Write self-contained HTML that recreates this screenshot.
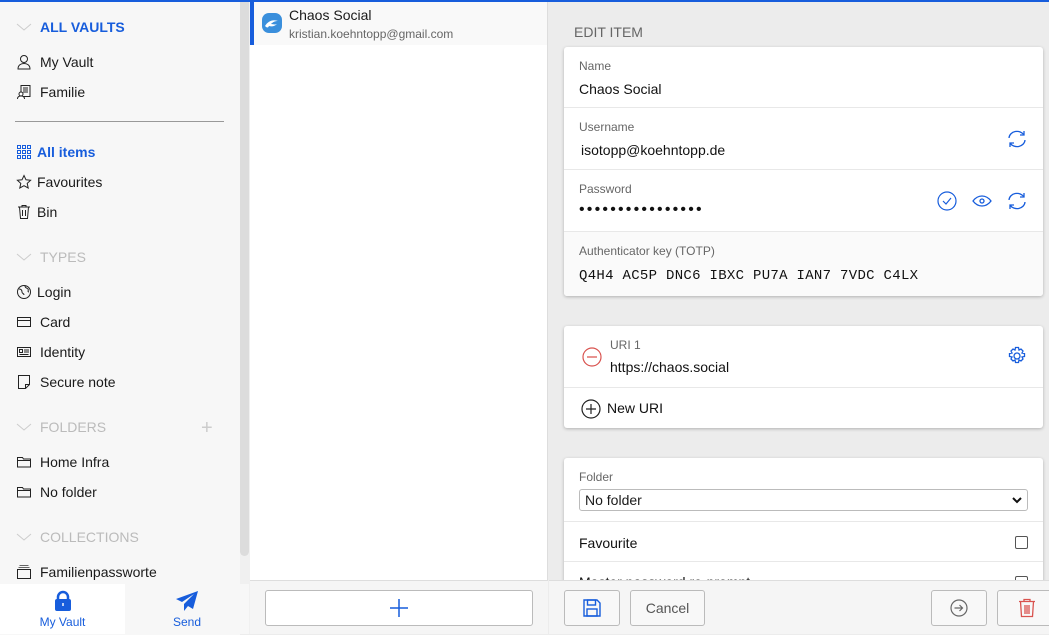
<!DOCTYPE html>
<html><head><meta charset="utf-8"><style>
*{box-sizing:border-box;margin:0;padding:0}
body{width:1049px;height:634px;overflow:hidden;font-family:"Liberation Sans",sans-serif;font-size:14px;color:#1a1a1a;position:relative;background:#ececec}
.topline{position:absolute;left:0;top:0;width:1049px;height:2px;background:#175ddc;z-index:5}
.side{position:absolute;left:0;top:1px;width:240px;height:634px;background:#f7f7f7}
.sb{position:absolute;left:240px;top:2px;width:9px;height:554px;background:#dcdcdc;border-radius:0 0 5px 5px}
.sbt{position:absolute;left:240px;top:2px;width:10px;height:632px;background:#f0f0f0}
.it{position:absolute;left:16px;font-size:14px;display:flex;align-items:center;gap:8px}
.it svg{width:16px;height:16px}
.hd{position:absolute;left:16px;font-size:14px;color:#bbb;display:flex;align-items:center;gap:8px}
.mid{position:absolute;left:250px;top:0;width:298px;height:634px;background:#fff;border-right:1px solid #ddd}
.right{position:absolute;left:549px;top:0;width:500px;height:634px;background:#ececec}
.card{position:absolute;left:15px;width:479px;background:#fff;border-radius:3px;box-shadow:0 1px 3px rgba(0,0,0,.25);overflow:hidden}
.row{position:relative;border-bottom:1px solid #e8e8e8;margin-left:0;padding-left:15px}
.lbl{font-size:12px;color:#666}
.val{font-size:14px;color:#111}
.bot{position:absolute;top:580px;height:54px;background:#f5f5f5;border-top:1px solid #ddd}
.btn{position:absolute;top:9px;height:36px;border:1px solid #bbb;border-radius:3px;background:#f8f8f8;display:flex;align-items:center;justify-content:center;color:#555}
</style></head><body>
<div class="topline"></div>
<div class="side">
 <div class="hd" style="top:18px;color:#175ddc;font-weight:bold"><svg width="16" height="10" viewBox="0 0 16 10"><path d="M1 2l7 6 7-6" fill="none" stroke="#ccc"/></svg>ALL VAULTS</div>
 <div class="it" style="top:53px"><svg viewBox="0 0 16 16"><circle cx="8" cy="5" r="3.5" fill="none" stroke="#222"/><path d="M2 15c0-4 3-5.5 6-5.5s6 1.5 6 5.5z" fill="none" stroke="#222"/></svg>My Vault</div>
 <div class="it" style="top:83px"><svg viewBox="0 0 16 16"><rect x="5" y="1.5" width="9" height="11" fill="none" stroke="#222"/><path d="M7 4h5M7 6h5M7 8h5" stroke="#222"/><circle cx="5" cy="10" r="2" fill="#fff" stroke="#222"/><path d="M1.5 15c0-2 1.5-3 3.5-3s3.5 1 3.5 3" fill="#fff" stroke="#222"/></svg>Familie</div>
 <div style="position:absolute;left:15px;top:120px;width:209px;height:1px;background:#999"></div>
 <div class="it" style="top:143px;color:#175ddc;font-weight:bold;gap:5px"><svg viewBox="0 0 16 16" fill="none" stroke="#175ddc"><rect x="1.5" y="1.5" width="3" height="3"/><rect x="6.5" y="1.5" width="3" height="3"/><rect x="11.5" y="1.5" width="3" height="3"/><rect x="1.5" y="6.5" width="3" height="3"/><rect x="6.5" y="6.5" width="3" height="3"/><rect x="11.5" y="6.5" width="3" height="3"/><rect x="1.5" y="11.5" width="3" height="3"/><rect x="6.5" y="11.5" width="3" height="3"/><rect x="11.5" y="11.5" width="3" height="3"/></svg>All items</div>
 <div class="it" style="top:173px;gap:5px"><svg viewBox="0 0 16 16"><path d="M8 1.5l2 4.3 4.6.5-3.4 3.1 1 4.6L8 11.7 3.8 14l1-4.6L1.4 6.3 6 5.8z" fill="none" stroke="#222"/></svg>Favourites</div>
 <div class="it" style="top:203px;gap:5px"><svg viewBox="0 0 16 16" fill="none" stroke="#222"><path d="M2 3h12M6 3V1.5h4V3M3.5 3l1 11.5h7l1-11.5M6.5 6v6M9.5 6v6"/></svg>Bin</div>
 <div class="hd" style="top:248px"><svg width="16" height="10" viewBox="0 0 16 10"><path d="M1 2l7 6 7-6" fill="none" stroke="#ccc"/></svg>TYPES</div>
 <div class="it" style="top:283px;gap:5px"><svg viewBox="0 0 16 16" fill="none" stroke="#222"><circle cx="8" cy="8" r="6.5"/><path d="M3 5c2 0 3 1 3 3s2 1 2 3M9 2c0 2 2 2 3 3s-1 3 1 3"/></svg>Login</div>
 <div class="it" style="top:313px"><svg viewBox="0 0 16 16" fill="none" stroke="#222"><rect x="1.5" y="3.5" width="13" height="9"/><path d="M1.5 6.5h13"/></svg>Card</div>
 <div class="it" style="top:343px"><svg viewBox="0 0 16 16" fill="none" stroke="#222"><rect x="1.5" y="3.5" width="13" height="9"/><rect x="3.5" y="5.5" width="3" height="3"/><path d="M8 6h5M8 8h5M3.5 10.5h9"/></svg>Identity</div>
 <div class="it" style="top:373px"><svg viewBox="0 0 16 16" fill="none" stroke="#222"><path d="M2.5 1.5h11v9l-4 4h-7zM13.5 10.5h-4v4"/></svg>Secure note</div>
 <div class="hd" style="top:418px"><svg width="16" height="10" viewBox="0 0 16 10"><path d="M1 2l7 6 7-6" fill="none" stroke="#ccc"/></svg>FOLDERS</div>
 <div style="position:absolute;left:201px;top:418px;color:#ccc;font-size:20px;line-height:18px">+</div>
 <div class="it" style="top:453px"><svg viewBox="0 0 16 16" fill="none" stroke="#222"><path d="M1.5 3.5h5l1 1.5h7v8h-13zM1.5 6.5h13"/></svg>Home Infra</div>
 <div class="it" style="top:483px"><svg viewBox="0 0 16 16" fill="none" stroke="#222"><path d="M1.5 3.5h5l1 1.5h7v8h-13zM1.5 6.5h13"/></svg>No folder</div>
 <div class="hd" style="top:528px"><svg width="16" height="10" viewBox="0 0 16 10"><path d="M1 2l7 6 7-6" fill="none" stroke="#ccc"/></svg>COLLECTIONS</div>
 <div class="it" style="top:563px"><svg viewBox="0 0 16 16" fill="none" stroke="#222"><rect x="1.5" y="5.5" width="13" height="9"/><path d="M2.5 3.5h11M3.5 1.5h9" stroke="#666"/></svg>Familienpasswort<span style="margin-left:-8px">e</span></div>
</div>
<div class="sbt"></div><div class="sb"></div>
<div style="position:absolute;left:0;top:584px;width:125px;height:50px;background:#fff;text-align:center;color:#175ddc;font-size:12px">
 <svg width="20" height="22" viewBox="0 0 20 22" style="margin-top:6px"><path d="M5 10V7a5 5 0 0110 0v3" fill="none" stroke="#175ddc" stroke-width="2.5"/><rect x="2" y="9" width="16" height="12" rx="2" fill="#175ddc"/><rect x="9.3" y="13" width="1.4" height="3" fill="#fff"/></svg>
 <div style="margin-top:0px">My Vault</div></div>
<div style="position:absolute;left:125px;top:584px;width:124px;height:50px;background:#f7f7f7;text-align:center;color:#175ddc;font-size:12px">
 <svg width="24" height="22" viewBox="0 0 24 22" style="margin-top:6px"><path d="M23 1L1 9l6 3 12-8-10 10v7l4-5 5 3z" fill="#175ddc"/></svg>
 <div style="margin-top:0px">Send</div></div>

<div class="mid">
 <div style="position:absolute;left:0;top:2px;width:297px;height:43px;background:#f9f9f9;border-left:4px solid #175ddc"></div>
 <svg style="position:absolute;left:12px;top:13px" width="20" height="20" viewBox="0 0 20 20"><rect x="0" y="0" width="20" height="20" rx="7" fill="#3a8fdc"/><path d="M3 13c3-5 8-7 13-5-3 0-5 1-7 3 2 0 4 1 6 0-2 2-5 3-8 2-1 2-2 2-4 0z" fill="#fff"/></svg>
 <div style="position:absolute;left:39px;top:7px;font-size:14px">Chaos Social</div>
 <div style="position:absolute;left:39px;top:27px;font-size:12px;color:#666">kristian.koehntopp@gmail.com</div>
</div>
<div class="bot" style="left:250px;width:298px">
 <div class="btn" style="left:15px;width:268px;background:#fff">
 <svg width="20" height="20" viewBox="0 0 20 20"><path d="M10 1v18M1 10h18" stroke="#175ddc" stroke-width="1.5"/></svg></div>
</div>

<div class="right">
 <div style="position:absolute;left:25px;top:24px;font-size:14px;color:#666">EDIT ITEM</div>
 <div class="card" style="top:47px;height:249px">
  <div class="row" style="height:61px"><div class="lbl" style="padding-top:12px">Name</div><div class="val" style="margin-top:8px">Chaos Social</div></div>
  <div class="row" style="height:62px"><div class="lbl" style="padding-top:12px">Username</div><div class="val" style="margin-top:8px;padding-left:2px">isotopp@koehntopp.de</div>
   <svg style="position:absolute;right:16px;top:22px" width="20" height="18" viewBox="0 0 20 18" fill="none" stroke="#175ddc" stroke-width="1.3"><path d="M2 8a8 7 0 0115-3M18 10a8 7 0 01-15 3M17 1v4h-4M3 17v-4h4"/></svg></div>
  <div class="row" style="height:62px"><div class="lbl" style="padding-top:12px">Password</div><div class="val" style="margin-top:5px;letter-spacing:2.2px;font-size:16px">••••••••••••••••</div>
   <svg style="position:absolute;right:86px;top:21px" width="20" height="20" viewBox="0 0 20 20" fill="none" stroke="#175ddc" stroke-width="1.2"><circle cx="10" cy="10" r="9"/><path d="M6 10l3 3 5-6"/></svg>
   <svg style="position:absolute;right:51px;top:24px" width="20" height="14" viewBox="0 0 20 14" fill="none" stroke="#175ddc" stroke-width="1.3"><path d="M1 7c3-4 6-5 9-5s6 1 9 5c-3 4-6 5-9 5S4 11 1 7z"/><circle cx="10" cy="7" r="2"/></svg>
   <svg style="position:absolute;right:16px;top:22px" width="20" height="18" viewBox="0 0 20 18" fill="none" stroke="#175ddc" stroke-width="1.3"><path d="M2 8a8 7 0 0115-3M18 10a8 7 0 01-15 3M17 1v4h-4M3 17v-4h4"/></svg></div>
  <div class="row" style="height:64px;background:#fafafa;border:none"><div class="lbl" style="padding-top:12px">Authenticator key (TOTP)</div><div class="val" style="margin-top:10px;font-family:'Liberation Mono',monospace;font-size:14px;letter-spacing:0.3px">Q4H4 AC5P DNC6 IBXC PU7A IAN7 7VDC C4LX</div></div>
 </div>
 <div class="card" style="top:326px;height:102px">
  <div class="row" style="height:62px;padding-left:46px"><div class="lbl" style="padding-top:12px">URI 1</div><div class="val" style="margin-top:7px">https://chaos.social</div>
   <svg style="position:absolute;left:18px;top:21px" width="20" height="20" viewBox="0 0 20 20" fill="none" stroke="#d9534f" stroke-width="1.2"><circle cx="10" cy="10" r="9"/><path d="M5 10h10"/></svg>
   <svg style="position:absolute;right:16px;top:20px" width="20" height="20" viewBox="0 0 20 20" fill="none" stroke="#175ddc" stroke-width="1.3"><path d="M8.5 1.5h3l.5 2.5 2-1 2 2-1 2 2.5.5v3l-2.5.5 1 2-2 2-2-1-.5 2.5h-3l-.5-2.5-2 1-2-2 1-2-2.5-.5v-3l2.5-.5-1-2 2-2 2 1z"/><circle cx="10" cy="10" r="3"/></svg></div>
  <div class="row" style="height:40px;border:none"><svg style="position:absolute;left:17px;top:11px" width="20" height="20" viewBox="0 0 20 20" fill="none" stroke="#222" stroke-width="1.2"><circle cx="10" cy="10" r="9"/><path d="M5 10h10M10 5v10"/></svg><div class="val" style="padding-left:28px;padding-top:12px">New URI</div></div>
 </div>
 <div class="card" style="top:458px;height:140px">
  <div class="row" style="height:64px"><div class="lbl" style="padding-top:12px">Folder</div>
   <div style="margin-top:5px;width:449px;height:22px;border:1px solid #bbb;border-radius:3px;padding:2px 5px;font-size:14px;position:relative">No folder<svg style="position:absolute;right:5px;top:7px" width="10" height="7" viewBox="0 0 10 7"><path d="M1 1l4 4 4-4" fill="none" stroke="#111" stroke-width="2"/></svg></div></div>
  <div class="row" style="height:40px"><div class="val" style="padding-top:13px">Favourite</div><div style="position:absolute;right:15px;top:14px;width:13px;height:13px;border:1px solid #555;border-radius:2px"></div></div>
  <div class="row" style="height:40px;border:none"><div class="val" style="padding-top:12px">Master password re-prompt</div><div style="position:absolute;right:15px;top:14px;width:13px;height:13px;border:1px solid #555;border-radius:2px"></div></div>
 </div>
</div>
<div class="bot" style="left:549px;width:500px">
 <div class="btn" style="left:15px;width:56px"><svg width="18" height="18" viewBox="0 0 18 18" fill="none" stroke="#175ddc" stroke-width="1.4"><path d="M1 1h13l3 3v13H1z"/><rect x="4.5" y="1" width="8" height="5"/><rect x="4" y="10" width="10" height="7"/></svg></div>
 <div class="btn" style="left:81px;width:75px;font-size:14px">Cancel</div>
 <div class="btn" style="left:382px;width:56px"><svg width="18" height="18" viewBox="0 0 18 18" fill="none" stroke="#666" stroke-width="1.2"><circle cx="9" cy="9" r="8"/><path d="M4.5 9h8M9.5 6l3 3-3 3"/></svg></div>
 <div class="btn" style="left:448px;width:60px"><svg width="18" height="20" viewBox="0 0 18 20" fill="none" stroke="#d9534f" stroke-width="1.3"><path d="M1 3.5h16M6 3.5V1.5h6v2M2.5 3.5l1 15h11l1-15M7 7v9M9 7v9M11 7v9"/></svg></div>
</div>
</body></html>
